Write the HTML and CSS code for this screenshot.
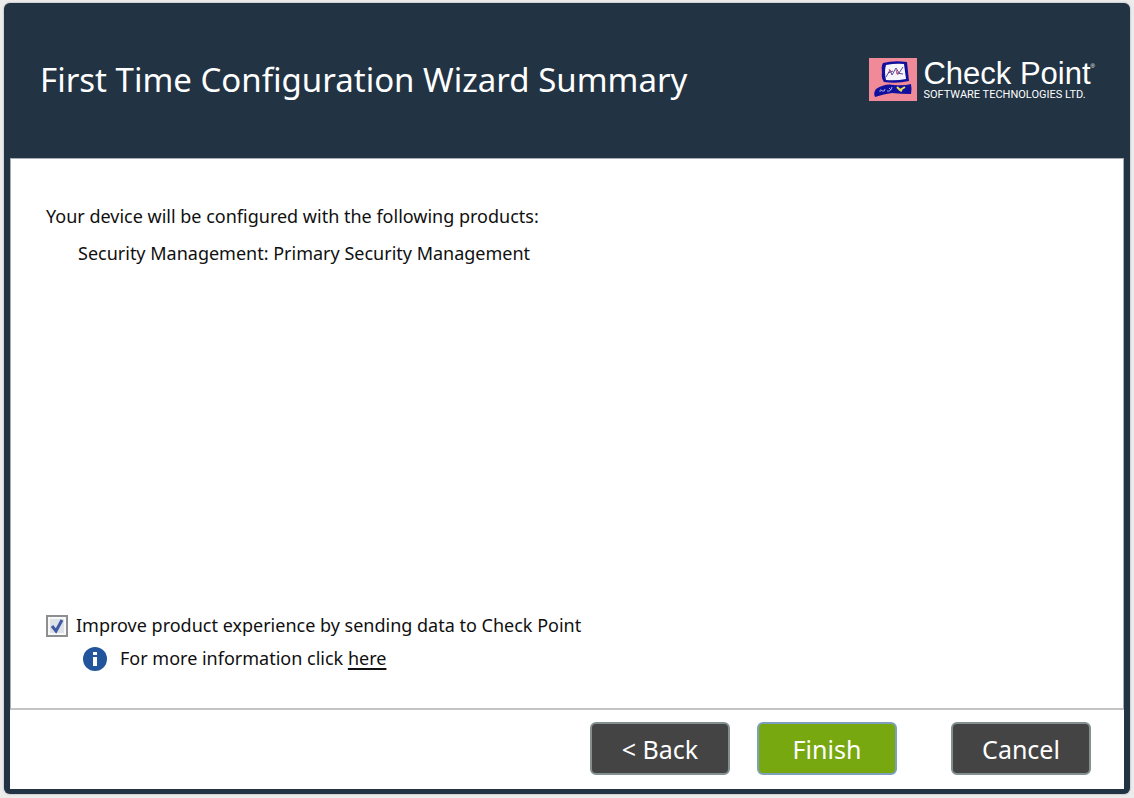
FILE: index.html
```html
<!DOCTYPE html>
<html lang="en">
<head>
<meta charset="utf-8">
<title>First Time Configuration Wizard</title>
<link rel="stylesheet" href="styles.css">
</head>
<body>
<main class="wizard">
  <header class="wizard-header">
    <h1 class="title">First Time Configuration Wizard Summary</h1>
    <div class="brand">
      <svg class="brand-mark" viewBox="0 0 48 43" aria-hidden="true">
        <rect width="48" height="43" fill="#f08a98"/>
        <path d="M14 5 Q25 2 38 4 Q39 14 40 23 Q28 26 15 24 Q12 20 13 14 Q12 8 14 5Z" fill="#10109c"/>
        <path d="M17 7 Q27 5 35 6 L37 21 Q27 23 17 22 Q15 14 17 7Z" fill="#f6f4fb"/>
        <path d="M17 19 L21 12 L23 17 L27 10 L30 15 L34 9 M19 15 L24 13 M27 15 L34 16" fill="none" stroke="#5a4694" stroke-width="1"/>
        <path d="M20 11 L22 14 M27 12 L29 17" stroke="#d84a5c" stroke-width="1"/>
        <path d="M7 31 Q16 25 25 27 Q35 28 42 26 Q43 31 42 36 Q32 36 23 35 Q15 36 6 39 Q4 35 7 31Z" fill="#10109c"/>
        <path d="M11 34 Q11 30 13 33 Q16 34 16 31 M18 33 Q22 34 23 29 M20 30 L22 32" fill="none" stroke="#a8a8e4" stroke-width="1"/>
        <path d="M28 29 L31 32 L36 29 M31 32 L33 33" fill="none" stroke="#e8dc50" stroke-width="2"/>
      </svg>
      <div class="brand-text">
        <span class="brand-name">Check Point<sup class="brand-reg">®</sup></span>
        <span class="brand-sub">SOFTWARE TECHNOLOGIES LTD.</span>
      </div>
    </div>
  </header>
  <section class="content">
    <div class="products">
      <p class="line">Your device will be configured with the following products:</p>
      <p class="line product">Security Management: Primary Security Management</p>
    </div>
    <div class="feedback">
      <label class="consent">
        <input class="check" type="checkbox" checked>
        <span class="line">Improve product experience by sending data to Check Point</span>
      </label>
      <div class="info">
        <svg class="info-icon" viewBox="0 0 24 24" aria-hidden="true">
          <circle cx="12" cy="12" r="12" fill="#22559b"/>
          <rect x="10" y="5" width="4" height="3" fill="#fff"/>
          <rect x="10" y="10" width="4" height="9" fill="#fff"/>
        </svg>
        <p class="line">For more information click <a class="link" href="#">here</a></p>
      </div>
    </div>
  </section>
  <footer class="actions">
    <button class="btn" type="button">&lt; Back</button>
    <button class="btn btn-primary" type="button">Finish</button>
    <button class="btn btn-cancel" type="button">Cancel</button>
  </footer>
</main>
</body>
</html>
```
FILE: styles.css
```css
* {
  box-sizing: border-box;
}

body {
  margin: 0;
  min-height: 100vh;
  display: flex;
  padding: 3px 4px 4px;
  background: #ececec;
  color: #101010;
  font-family: "Noto Sans", "Open Sans", sans-serif;
}

.wizard {
  flex: 1;
  display: flex;
  flex-direction: column;
  padding: 0 6px 5px;
  border-radius: 6px;
  background: #223343;
  box-shadow: 0 0 2px #909090;
}

.wizard-header {
  display: flex;
  align-items: center;
  justify-content: space-between;
  height: 155px;
  padding: 0 29px 2px 30px;
}

.title {
  margin: 0;
  color: #fff;
  font-size: 33px;
  font-weight: 400;
  line-height: 46px;
}

.brand {
  display: flex;
  gap: 6px;
  color: #fff;
  font-family: "Liberation Sans", Arial, sans-serif;
}

.brand-mark {
  width: 48px;
  height: 43px;
}

.brand-text {
  display: flex;
  flex-direction: column;
  white-space: nowrap;
}

.brand-name {
  font-size: 31px;
  line-height: 31px;
}

.brand-reg {
  font-size: 6px;
  line-height: 6px;
  vertical-align: 16px;
}

.brand-sub {
  font-family: Roboto, "Liberation Sans", sans-serif;
  font-size: 11px;
  line-height: 11px;
}

.content {
  flex: 1;
  display: flex;
  flex-direction: column;
  justify-content: space-between;
  padding: 44px 35px 36px;
  border: 1px solid #a9adb2;
  border-bottom: 2px solid #c4c4c4;
  background: #fff;
}

.products {
  display: flex;
  flex-direction: column;
  gap: 10px;
}

.line {
  margin: 0;
  font-size: 18px;
  line-height: 27px;
}

.product {
  padding-left: 32px;
}

.feedback {
  display: flex;
  flex-direction: column;
  gap: 6px;
}

.consent {
  display: flex;
  align-items: center;
  gap: 8px;
}

.check {
  appearance: none;
  width: 22px;
  height: 22px;
  margin: 0;
  border: 2px solid #8d8f91;
  background: #e4e7ec;
}

.check:checked {
  background: url("data:image/svg+xml,%3Csvg xmlns='http://www.w3.org/2000/svg' viewBox='0 0 18 18'%3E%3Cpath d='M0 0H18V18H0Z' fill='%23f8f8f8'/%3E%3Cpath d='M2 2H16V16H2Z' fill='%23dde1e8'/%3E%3Cpath d='M4 9L8 14L14 3' fill='none' stroke='%234059a3' stroke-width='3'/%3E%3C/svg%3E") center / 18px no-repeat;
}

.info {
  display: flex;
  align-items: center;
  gap: 13px;
  padding-left: 37px;
}

.info-icon {
  width: 24px;
  height: 24px;
}

.link {
  color: inherit;
  text-decoration: underline;
  text-decoration-thickness: 2px;
  text-underline-offset: 3px;
}

.actions {
  display: flex;
  justify-content: flex-end;
  gap: 27px;
  padding: 12px 33px 14px;
  background: #fff;
}

.btn {
  width: 140px;
  height: 53px;
  padding: 0;
  border: 2px solid #83908f;
  border-radius: 6px;
  background: #444;
  color: #fff;
  font: 400 25px/34px "Noto Sans", "Open Sans", sans-serif;
}

.btn-primary {
  border-color: #7fa0bd;
  background: #77a810;
}

.btn-cancel {
  margin-left: 27px;
}
```
